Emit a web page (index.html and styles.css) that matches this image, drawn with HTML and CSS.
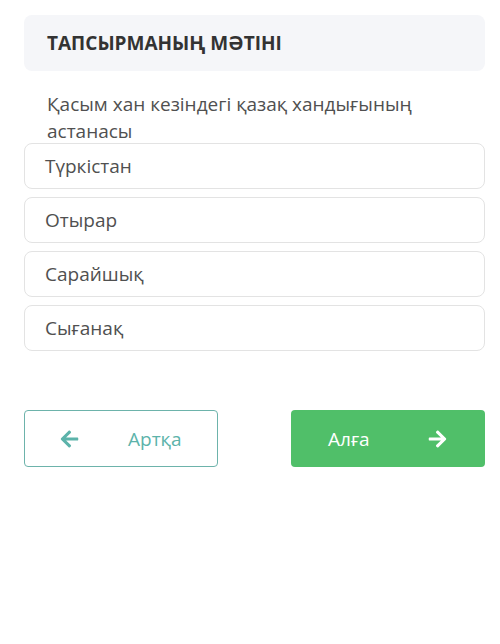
FILE: index.html
```html
<!DOCTYPE html>
<html lang="kk">
<head>
    <meta charset="UTF-8">
    <meta name="viewport" content="width=device-width, initial-scale=1.0">
    <title>Тапсырма</title>
    <link rel="stylesheet" href="styles.css">
</head>
<body>

<div class="task">
    <div class="task-header">ТАПСЫРМАНЫҢ МӘТІНІ</div>

    <div class="question">Қасым хан кезіндегі қазақ хандығының астанасы</div>

    <div class="answers">
        <div class="answer">Түркістан</div>
        <div class="answer">Отырар</div>
        <div class="answer">Сарайшық</div>
        <div class="answer">Сығанақ</div>
    </div>

    <div class="nav">
        <button class="nav-btn back">
            <svg class="arrow" viewBox="0 0 448 512" xmlns="http://www.w3.org/2000/svg">
                <path d="M257.5 445.1l-22.2 22.2c-9.4 9.4-24.6 9.4-33.9 0L7 273c-9.4-9.4-9.4-24.6 0-33.9L201.4 44.7c9.4-9.4 24.6-9.4 33.9 0l22.2 22.2c9.5 9.5 9.3 25-.4 34.3L136.6 216H424c13.3 0 24 10.7 24 24v32c0 13.3-10.7 24-24 24H136.6l120.5 114.8c9.8 9.300 10 24.8.4 34.3z" fill="currentColor"/>
            </svg>
            <span>Артқа</span>
        </button>
        <button class="nav-btn next">
            <span>Алға</span>
            <svg class="arrow" viewBox="0 0 448 512" xmlns="http://www.w3.org/2000/svg">
                <path d="M190.5 66.9l22.2-22.2c9.4-9.4 24.6-9.4 33.9 0L441 239c9.4 9.4 9.4 24.6 0 33.9L246.6 467.3c-9.4 9.4-24.6 9.4-33.9 0l-22.2-22.2c-9.5-9.5-9.3-25 .4-34.3L311.4 296H24c-13.3 0-24-10.7-24-24v-32c0-13.3 10.7-24 24-24h287.4L190.9 101.2c-9.8-9.3-10-24.8-.4-34.3z" fill="currentColor"/>
            </svg>
        </button>
    </div>
</div>

</body>
</html>
```

FILE: styles.css
```css
body {
    margin: 0;
    font-family: "Open Sans", "Noto Sans", sans-serif;
    background: #fff;
    color: #444;
}

.task {
    padding: 15px 15px 0 24px;
}

.task-header {
    height: 56px;
    display: flex;
    align-items: center;
    padding-left: 23px;
    background-color: #f5f6f9;
    border-radius: 8px;
    font-size: 19px;
    font-weight: 700;
    color: #333;
}

.question {
    margin-top: 20px;
    padding-left: 23px;
    padding-right: 40px;
    font-size: 19px;
    line-height: 27px;
    color: #505050;
}

.answers {
    display: flex;
    flex-direction: column;
    gap: 8px;
    margin-top: -2px;
}

.answer {
    height: 44px;
    display: flex;
    align-items: center;
    padding-left: 20px;
    border: 1px solid #e3e3e3;
    border-radius: 8px;
    font-size: 19px;
    color: #505050;
}

.nav {
    display: flex;
    justify-content: space-between;
    margin-top: 59px;
}

.nav-btn {
    width: 194px;
    height: 57px;
    display: flex;
    align-items: center;
    border-radius: 4px;
    font-family: "Open Sans", "Noto Sans", sans-serif;
    font-size: 19px;
    cursor: pointer;
}

.nav-btn .arrow {
    width: 19px;
    height: 20px;
}

.back {
    background: #fff;
    border: 1.5px solid #6db3ab;
    color: #5cb3aa;
    padding-left: 35px;
    gap: 49px;
}

.next {
    background: #50bf69;
    border: none;
    color: #fff;
    padding-left: 37px;
    gap: 58px;
}
```
